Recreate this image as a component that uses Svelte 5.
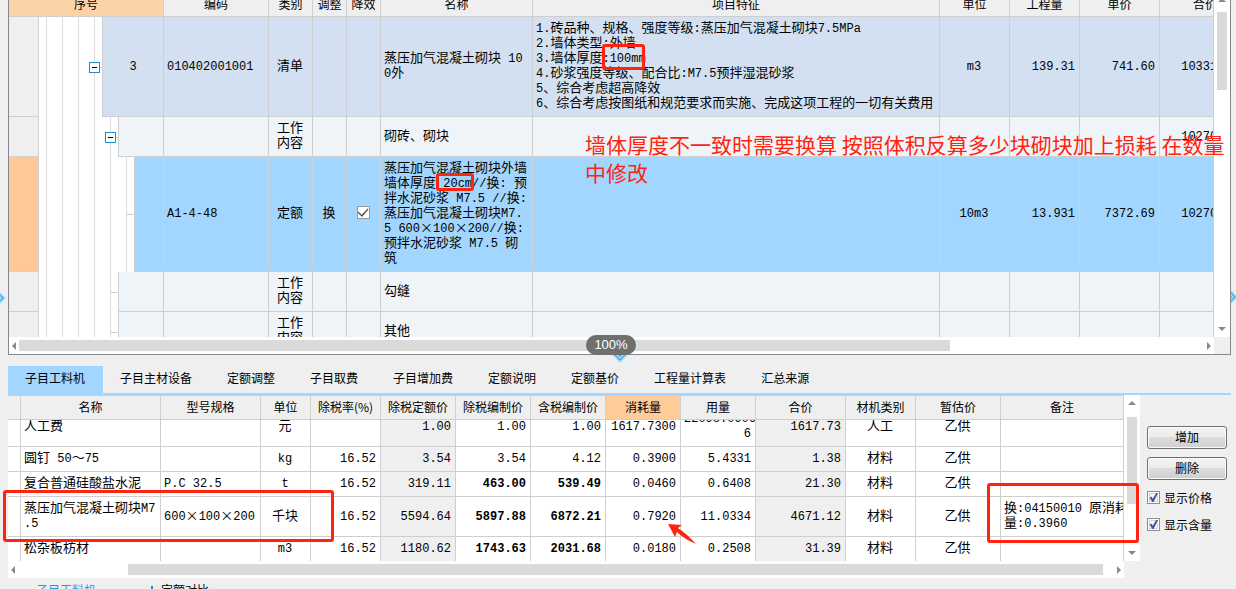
<script lang="ts">
    import {onMount} from "svelte";

    interface BillRow {
        depth: number;
        tone: "item" | "work" | "selected";
        expandable?: boolean;
        index?: string;
        code?: string;
        kind: string;
        adjust?: string;
        reduce?: boolean;
        name: string;
        feature?: string;
        unit?: string;
        amount?: string;
        price?: string;
        total?: string;
    }

    const billRows: BillRow[] = [
        {
            depth: 4,
            tone: "item",
            expandable: true,
            index: "3",
            code: "010402001001",
            kind: "清单",
            name: "蒸压加气混凝土砌块 10\n0外",
            feature:
                "1.砖品种、规格、强度等级:蒸压加气混凝土砌块7.5MPa\n2.墙体类型:外墙\n3.墙体厚度:100mm\n4.砂浆强度等级、配合比:M7.5预拌湿混砂浆\n5、综合考虑超高降效\n6、综合考虑按图纸和规范要求而实施、完成这项工程的一切有关费用",
            unit: "m3",
            amount: "139.31",
            price: "741.60",
            total: "103312.30",
        },
        {depth: 5, tone: "work", expandable: true, kind: "工作\n内容", name: "砌砖、砌块", total: "102708.94"},
        {
            depth: 6,
            tone: "selected",
            code: "A1-4-48",
            kind: "定额",
            adjust: "换",
            reduce: true,
            name: "蒸压加气混凝土砌块外墙\n墙体厚度 20cm//换: 预\n拌水泥砂浆 M7.5 //换:\n蒸压加气混凝土砌块M7.\n5 600×100×200//换:\n预拌水泥砂浆 M7.5 砌\n筑",
            unit: "10m3",
            amount: "13.931",
            price: "7372.69",
            total: "102708.94",
        },
        {depth: 5, tone: "work", kind: "工作\n内容", name: "勾缝"},
        {depth: 5, tone: "work", kind: "工作\n内容", name: "其他"},
    ];

    const tabs = ["子目工料机", "子目主材设备", "定额调整", "子目取费", "子目增加费", "定额说明", "定额基价", "工程量计算表", "汇总来源"];
    let activeTab = $state(0);

    const headings = ["名称", "型号规格", "单位", "除税率(%)", "除税定额价", "除税编制价", "含税编制价", "消耗量", "用量", "合价", "材机类别", "暂估价", "备注"];
    const aligns = ["left", "left", "center", "right", "right", "right", "right", "right", "right", "right", "center", "center", "left"];
    const locked = [4, 9];

    // cells follow the order of headings
    const materials = [
        {cells: ["人工费", "", "元", "", "1.00", "1.00", "1.00", "1617.7300", "22098.0906\n6", "1617.73", "人工", "乙供", ""], adjusted: false},
        {cells: ["圆钉 50～75", "", "kg", "16.52", "3.54", "3.54", "4.12", "0.3900", "5.4331", "1.38", "材料", "乙供", ""], adjusted: false},
        {cells: ["复合普通硅酸盐水泥", "P.C 32.5", "t", "16.52", "319.11", "463.00", "539.49", "0.0460", "0.6408", "21.30", "材料", "乙供", ""], adjusted: true},
        {cells: ["蒸压加气混凝土砌块M7\n.5", "600×100×200", "千块", "16.52", "5594.64", "5897.88", "6872.21", "0.7920", "11.0334", "4671.12", "材料", "乙供", "换:04150010 原消耗\n量:0.3960"], adjusted: true},
        {cells: ["松杂板枋材", "", "m3", "16.52", "1180.62", "1743.63", "2031.68", "0.0180", "0.2508", "31.39", "材料", "乙供", ""], adjusted: true},
    ];

    let showPrice = $state(true);
    let showContent = $state(true);
    let materialScroller: HTMLElement;

    onMount(() => {
        materialScroller.scrollTop = 13;
    });

    // Latin runs use a narrower face than the Chinese around them
    function runs(text: string) {
        return text.match(/[\x20-\x7e]+|[^\x20-\x7e]+/g) ?? [];
    }
</script>

{#snippet mixed(text: string)}
    {#each runs(text) as run}{#if /^[\x20-\x7e]/.test(run)}<span class="latin">{run}</span>{:else}{run}{/if}{/each}
{/snippet}

{#snippet arrow(direction: string)}
    <svg class="arrow {direction}" viewBox="0 0 8 8" aria-hidden="true">
        {#if direction === "left"}
            <path d="M6 0v8L2 4z" />
        {:else if direction === "right"}
            <path d="M2 0v8l4-4z" />
        {:else if direction === "up"}
            <path d="M0 6h8L4 2z" />
        {:else}
            <path d="M0 2h8L4 6z" />
        {/if}
    </svg>
{/snippet}

{#snippet diamond(place: string)}
    <svg class="diamond {place}" viewBox="0 0 16 16" aria-hidden="true">
        <path d="M8 0l8 8-8 8-8-8z" fill="#a9dcf7" />
        <path d="M8 3l5 5-5 5-5-5z" fill="none" stroke="#35a8e6" stroke-width="1.2" />
        <path d="M8 6l2 2-2 2-2-2z" fill="#35a8e6" />
    </svg>
{/snippet}

<main>
    <section class="bill">
        <div class="scroller bill-scroller">
            <table class="bill-table">
                <colgroup>
                    <col class="w30" /><col class="w125" /><col class="w105" /><col class="w44" /><col class="w34" /><col class="w34" />
                    <col class="w152" /><col /><col class="w70" /><col class="w70" /><col class="w80" /><col class="w91" />
                </colgroup>
                <thead>
                    <tr>
                        <th colspan="2" class="sorted">序号</th>
                        <th>编码</th>
                        <th>类别</th>
                        <th>调整</th>
                        <th>降效</th>
                        <th>名称</th>
                        <th>项目特征</th>
                        <th>单位</th>
                        <th>工程量</th>
                        <th>单价</th>
                        <th>合价</th>
                    </tr>
                </thead>
                <tbody>
                    {#each billRows as row}
                        <tr class={row.tone}>
                            <td class="row-head"></td>
                            <td class="tree-cell">
                                <div class="tree">
                                    {#each {length: row.depth} as _, level}
                                        <span class="guide" class:first={level === 0}></span>
                                    {/each}
                                    <span class="stub">
                                        {#if row.expandable}
                                            <button class="expander" aria-label="折叠"></button>
                                        {/if}
                                    </span>
                                    <span class="node">{@render mixed(row.index ?? "")}</span>
                                </div>
                            </td>
                            <td>{@render mixed(row.code ?? "")}</td>
                            <td class="center">{row.kind}</td>
                            <td class="center">{row.adjust ?? ""}</td>
                            <td class="center">
                                {#if row.reduce}
                                    <input type="checkbox" class="tick" checked aria-label="降效" />
                                {/if}
                            </td>
                            <td>{@render mixed(row.name)}</td>
                            <td>{@render mixed(row.feature ?? "")}</td>
                            <td class="center">{@render mixed(row.unit ?? "")}</td>
                            <td class="right">{@render mixed(row.amount ?? "")}</td>
                            <td class="right">{@render mixed(row.price ?? "")}</td>
                            <td class="right">{@render mixed(row.total ?? "")}</td>
                        </tr>
                    {/each}
                </tbody>
            </table>
        </div>
        <div class="vbar">
            {@render arrow("up")}
            <div class="track"><div class="thumb bill-vthumb"></div></div>
            {@render arrow("down")}
        </div>
        <div class="hbar">
            {@render arrow("left")}
            <div class="track"><div class="thumb bill-hthumb"></div></div>
            {@render arrow("right")}
        </div>
        <div class="corner"></div>
    </section>

    <nav class="tabs">
        {#each tabs as tab, i}
            <button class="tab" class:active={i === activeTab} onclick={() => (activeTab = i)}>{tab}</button>
        {/each}
    </nav>

    <section class="detail">
        <div class="materials">
            <div class="scroller material-scroller" bind:this={materialScroller}>
                <table class="material-table">
                    <colgroup>
                        <col class="w13" /><col class="w140" /><col class="w100" /><col class="w50" /><col class="w70" />
                        <col class="w75" /><col class="w75" /><col class="w75" /><col class="w75" /><col class="w75" />
                        <col class="w90" /><col class="w70" /><col class="w85" /><col />
                    </colgroup>
                    <thead>
                        <tr>
                            <th></th>
                            {#each headings as heading}
                                <th class:current={heading === "消耗量"}>{heading}</th>
                            {/each}
                        </tr>
                    </thead>
                    <tbody>
                        {#each materials as material}
                            <tr>
                                <td></td>
                                {#each material.cells as cell, i}
                                    <td class={aligns[i]} class:locked={locked.includes(i)} class:bold={material.adjusted && (i === 5 || i === 6)}>
                                        {@render mixed(cell)}
                                    </td>
                                {/each}
                            </tr>
                        {/each}
                    </tbody>
                </table>
            </div>
            <div class="vbar material-vbar">
                {@render arrow("up")}
                <div class="track"><div class="thumb material-vthumb"></div></div>
                {@render arrow("down")}
            </div>
            <div class="hbar">
                {@render arrow("left")}
                <div class="track"><div class="thumb material-hthumb"></div></div>
                {@render arrow("right")}
            </div>
        </div>
        <aside class="actions">
            <button class="action">增加</button>
            <button class="action">删除</button>
            <label><input type="checkbox" class="tick blue" bind:checked={showPrice} />显示价格</label>
            <label><input type="checkbox" class="tick blue" bind:checked={showContent} />显示含量</label>
        </aside>
    </section>

    <footer>
        <span class="link">子目工料机</span>
        <svg class="footer-icon" viewBox="0 0 8 12" aria-hidden="true">
            <path d="M3 2h2v3h3v2H0V5h3z" fill="#2f7fc4" />
        </svg>
        <span>定额对比</span>
    </footer>

    {@render diamond("at-left")}
    {@render diamond("at-right")}
    {@render diamond("at-middle")}
    <div class="zoom-badge">100%</div>

    <p class="note">墙体厚度不一致时需要换算 按照体积反算多少块砌块加上损耗 在数量中修改</p>
    <div class="mark thickness"></div>
    <div class="mark quota"></div>
    <div class="mark block"></div>
    <div class="mark remark"></div>
    <svg class="pointer" viewBox="0 0 28 21" aria-hidden="true">
        <path d="M0 0l14 1-4 3q9 6 18 16Q16 15 9 8l-2 5z" fill="#ff2310" />
    </svg>
</main>

<style>
    :global(body) {
        background: #efefef;
    }

    main {
        position: relative;
        height: 100vh;
        overflow: hidden;
        font-family: "Noto Sans CJK SC", sans-serif;
        font-size: 12px;
        color: #000;
    }

    button {
        font: inherit;
        color: inherit;
    }

    .bill {
        display: grid;
        grid-template-columns: minmax(0, 1fr) 16px;
        margin: 0 5px 0 8px;
        background: #fff;
        border: 1px solid #828790;
        border-top: 0;
    }

    .scroller {
        overflow: hidden;
        border-right: 1px solid #cfcfcf;
    }

    .bill-scroller {
        height: 337px;
    }

    table {
        table-layout: fixed;
        border-collapse: separate;
        border-spacing: 0;
        width: 100%;
    }

    .bill-table {
        width: calc(100% + 38px);
        margin-top: -7px;
    }

    .w13 { width: 13px; }
    .w30 { width: 30px; }
    .w34 { width: 34px; }
    .w44 { width: 44px; }
    .w50 { width: 50px; }
    .w70 { width: 70px; }
    .w75 { width: 75px; }
    .w80 { width: 80px; }
    .w85 { width: 85px; }
    .w90 { width: 90px; }
    .w91 { width: 91px; }
    .w100 { width: 100px; }
    .w105 { width: 105px; }
    .w125 { width: 125px; }
    .w140 { width: 140px; }
    .w152 { width: 152px; }

    th {
        padding: 0 0 1px;
        font-weight: 400;
        line-height: 22px;
        white-space: nowrap;
        background: #efefef;
        border-right: 1px solid #cfcfcf;
        border-bottom: 1px solid #cfcfcf;
    }

    th.sorted {
        background: #fcd3a9;
    }

    th.current {
        background: #ffcb99;
    }

    td {
        padding: 2px 4px 7px 3px;
        font-size: 13px;
        line-height: 15px;
        white-space: pre;
        overflow: hidden;
        border-right: 1px solid #cfcfcf;
        border-bottom: 1px solid #cfcfcf;
    }

    /* no line height of its own, so that mixed lines stay as tall as Chinese ones */
    .latin {
        font-family: "Liberation Mono", monospace;
        font-size: 12px;
        line-height: 0;
    }

    .center {
        text-align: center;
    }

    .right {
        text-align: right;
    }

    .bold {
        font-weight: 700;
    }

    .item td,
    .item .node {
        background: #d2e0f1;
    }

    .work td,
    .work .node {
        background: #eff4f9;
    }

    .selected td,
    .selected .node {
        background: #a3d6ff;
    }

    tr td.row-head {
        background: #efefef;
    }

    tr.selected td.row-head {
        background: #ffc896;
    }

    tr td.tree-cell {
        height: 1px;
        padding: 0;
        background: #fff;
        border-bottom: 0;
    }

    .tree {
        display: flex;
        height: 100%;
    }

    .guide {
        flex: none;
        box-sizing: border-box;
        width: 16px;
        border-right: 1px solid #dcdcdc;
    }

    .guide.first {
        width: 8px;
    }

    .stub {
        flex: none;
        display: flex;
        align-items: center;
        width: 7px;
        background: linear-gradient(#cfcfcf, #cfcfcf) center / 100% 1px no-repeat;
    }

    .expander {
        flex: none;
        width: 11px;
        height: 11px;
        margin-left: -6px;
        padding: 0;
        background: linear-gradient(#000, #000) center / 5px 1px no-repeat #fff;
        border: 1px solid #1d8fcb;
    }

    .node {
        flex: 1;
        display: flex;
        align-items: center;
        justify-content: center;
        border-left: 1px solid #cfcfcf;
        border-bottom: 1px solid #cfcfcf;
    }

    .tick {
        appearance: none;
        display: inline-grid;
        place-content: center;
        box-sizing: border-box;
        width: 13px;
        height: 13px;
        margin: 0;
        vertical-align: middle;
        background: #fff;
        border: 1px solid #999;
    }

    .tick:checked::before {
        content: "";
        width: 11px;
        height: 9px;
        background: #555;
        clip-path: polygon(0 45%, 10% 35%, 38% 70%, 92% 0, 100% 10%, 40% 95%);
    }

    .tick.blue {
        background: #f4f5f7;
        border-color: #8e8f8f;
        box-shadow: inset 0 0 0 1px #fff, inset 0 0 0 2px #cfd3d9;
    }

    .tick.blue:checked::before {
        width: 9px;
        height: 9px;
        background: #3a559c;
        clip-path: polygon(8% 50%, 25% 40%, 42% 65%, 80% 0, 100% 0, 50% 100%, 36% 100%);
    }

    .vbar,
    .hbar {
        display: flex;
        align-items: center;
        background: #fff;
    }

    .vbar {
        flex-direction: column;
        padding: 0 3px;
    }

    .hbar {
        height: 17px;
    }

    .track {
        flex: 1;
        align-self: stretch;
    }

    .hbar .track {
        padding: 3px 0;
    }

    .thumb {
        height: 100%;
        background: #dadada;
    }

    .arrow {
        flex: none;
        width: 10px;
        height: 8px;
        fill: #8a8a8a;
    }

    .vbar .arrow {
        margin: 0 0 4px;
    }

    .bill .arrow.up {
        margin: -4px 0 8px;
    }

    .bill-vthumb {
        height: 25%;
    }

    .bill-hthumb {
        width: 78.6%;
    }

    .corner {
        background: #efefef;
    }

    .tabs {
        display: flex;
        margin: 11px 5px 0 8px;
        border-bottom: 2px solid #a3d6ff;
    }

    .tab {
        height: 27px;
        padding: 0 18px 4px 17px;
        line-height: 23px;
        white-space: nowrap;
        background: none;
        border: 0;
    }

    .tab.active {
        background: #a3d6ff;
    }

    .detail {
        display: flex;
        margin: 0 9px 0 8px;
    }

    .materials {
        flex: 1;
        min-width: 0;
        display: grid;
        grid-template-columns: minmax(0, 1fr) 16px;
    }

    .material-scroller {
        height: 165px;
        background: #fff;
        border-top: 1px solid #cfcfcf;
    }

    .material-table thead th {
        position: sticky;
        top: 0;
    }

    .material-table th:last-child,
    .material-table td:last-child {
        border-right: 0;
    }

    .locked {
        background: #efefef;
    }

    .material-vbar .arrow.up {
        margin: 4px 0 10px;
    }

    .material-vthumb {
        height: 66%;
    }

    .material-hthumb {
        width: 89%;
        margin-left: 10%;
    }

    .actions {
        flex: none;
        width: 80px;
        padding: 31px 0 0 7px;
    }

    .action {
        display: block;
        width: 100%;
        height: 23px;
        margin-bottom: 8px;
        padding: 0 0 2px;
        line-height: 19px;
        background: linear-gradient(#f3f3f3, #ebebeb 50%, #dcdcdc 50%, #cfcfcf);
        border: 1px solid #707070;
        border-radius: 3px;
        box-shadow: inset 0 0 0 1px #fafafa;
    }

    .actions label {
        display: flex;
        align-items: center;
        gap: 4px;
        height: 19px;
        margin-bottom: 8px;
        white-space: nowrap;
    }

    footer {
        display: flex;
        padding: 3px 36px;
        line-height: 18px;
    }

    .link {
        color: #1e9bf0;
    }

    .footer-icon {
        width: 8px;
        height: 12px;
        margin: 3px 5px 0 52px;
    }

    .diamond {
        position: absolute;
        width: 16px;
        height: 16px;
    }

    .at-left {
        left: -10px;
        top: 290px;
    }

    .at-right {
        right: -2px;
        top: 289px;
        clip-path: inset(0 0 0 9px);
    }

    .at-middle {
        left: 50%;
        top: 347px;
        margin-left: -6px;
        clip-path: inset(8px 0 0);
    }

    .zoom-badge {
        position: absolute;
        left: 50%;
        top: 335px;
        width: 50px;
        margin-left: -32px;
        font-family: "Liberation Sans", sans-serif;
        font-size: 13px;
        line-height: 20px;
        text-align: center;
        color: #fff;
        background: #6f6f6f;
        border-radius: 10px;
    }

    .note {
        position: absolute;
        left: 585px;
        right: 4px;
        top: 130px;
        margin: 0;
        font-size: 21px;
        line-height: 28px;
        color: #ff2310;
    }

    .mark {
        position: absolute;
        box-sizing: border-box;
        border: 3px solid #ff2310;
        border-radius: 3px;
    }

    .thickness {
        left: 602px;
        top: 44px;
        width: 43px;
        height: 26px;
    }

    .quota {
        left: 436px;
        top: 173px;
        width: 38px;
        height: 18px;
    }

    .block {
        left: 3px;
        top: 490px;
        width: 331px;
        height: 52px;
    }

    .remark {
        left: 987px;
        top: 483px;
        width: 152px;
        height: 60px;
    }

    .pointer {
        position: absolute;
        left: 668px;
        top: 524px;
        width: 28px;
        height: 21px;
    }
</style>
